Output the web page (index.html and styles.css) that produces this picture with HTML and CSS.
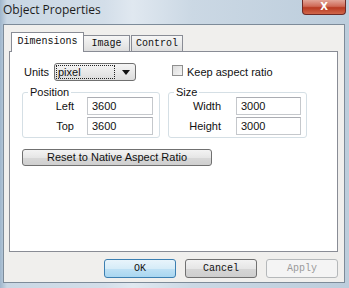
FILE: index.html
```html
<!DOCTYPE html>
<html lang="en">
  <head>
    <meta charset="UTF-8" />
    <title>Object Properties</title>
    <link rel="stylesheet" href="styles.css">
  </head>
  <body>
    <div class="window">
      <div class="titlebar">
        <div class="title">Object Properties</div>
        <div class="close">X</div>
      </div>
      <div class="client">
        <div class="tabs">
          <div class="tab active">Dimensions</div>
          <div class="tab tab-image">Image</div>
          <div class="tab tab-control">Control</div>
        </div>
        <div class="panel">
          <div class="top-grid">
            <div class="units-row">
              <span class="units-label">Units</span>
              <div class="select">
                <span class="select-value">pixel</span>
                <span class="arrow"></span>
              </div>
            </div>
            <div class="check-row">
              <span class="checkbox"></span>
              <span>Keep aspect ratio</span>
            </div>
            <fieldset class="group group-pos">
              <legend>Position</legend>
              <div class="fields">
                <label>Left</label>
                <div class="input">3600</div>
                <label>Top</label>
                <div class="input">3600</div>
              </div>
            </fieldset>
            <fieldset class="group group-size">
              <legend>Size</legend>
              <div class="fields">
                <label>Width</label>
                <div class="input">3000</div>
                <label>Height</label>
                <div class="input">3000</div>
              </div>
            </fieldset>
          </div>
          <div class="reset-btn">Reset to Native Aspect Ratio</div>
        </div>
        <div class="footer">
          <div class="btn btn-default">OK</div>
          <div class="btn">Cancel</div>
          <div class="btn btn-disabled">Apply</div>
        </div>
      </div>
    </div>
  </body>
</html>
```

FILE: styles.css
```css
html,
body {
  margin: 0;
  padding: 0;
}

body {
  font-family: "Liberation Sans", Arial, sans-serif;
  font-size: 11px;
  color: #111;
}

.window {
  width: 349px;
  height: 288px;
  display: flex;
  flex-direction: column;
  background: linear-gradient(to right, #9fb6cc 0, #c9d7e4 2%, #d3dee9 30%, #e0e8f0 38%, #cbd8e4 55%, #bccddc 100%);
}

/* Barre de titre */
.titlebar {
  height: 24px;
  display: flex;
  align-items: flex-start;
  padding-left: 3px;
}

.title {
  font-family: "Open Sans", sans-serif;
  font-size: 12px;
  line-height: 20px;
  color: #1c1c1c;
}

.close {
  margin-left: auto;
  margin-right: 3px;
  width: 44px;
  height: 15px;
  box-sizing: border-box;
  border: 1px solid #6e2a26;
  border-top: none;
  border-radius: 0 0 4px 4px;
  background: linear-gradient(to bottom, #e2a598 0, #cf6a57 45%, #b83a22 55%, #d0664a 100%);
  color: #fff;
  font-family: "DejaVu Sans", sans-serif;
  font-weight: bold;
  font-size: 10px;
  line-height: 14px;
  text-align: center;
}

/* Zone client */
.client {
  flex: 1;
  margin: 0 4px 5px 3px;
  background-color: #f0efed;
  border: 1px solid #7d8b99;
  display: flex;
  flex-direction: column;
}

.tabs {
  display: flex;
  align-items: flex-end;
  margin: 7px 0 0 7px;
  font-family: "Liberation Mono", monospace;
  font-size: 10px;
}

.tab {
  box-sizing: border-box;
  height: 16px;
  border: 1px solid #898c95;
  border-bottom: none;
  background: linear-gradient(to bottom, #f6f6f6, #dedede);
  text-align: center;
  line-height: 15px;
  margin-bottom: 0;
}

.tab.active {
  width: 73px;
  height: 20px;
  background: #fff;
  margin-bottom: -1px;
  position: relative;
  z-index: 1;
  line-height: 18px;
}

.tab-image {
  width: 46px;
  border-left: none;
}

.tab-control {
  width: 52px;
  margin-left: 1px;
}

.panel {
  box-sizing: border-box;
  height: 201px;
  margin: 0 6px 0 5px;
  padding: 11px 0 0 12px;
  background: #fff;
  border: 1px solid #898c95;
}

.top-grid {
  display: grid;
  grid-template-columns: 138px 139px;
  column-gap: 8px;
  row-gap: 5px;
}

.units-row {
  display: flex;
  align-items: center;
  height: 18px;
}

.units-label {
  width: 32px;
  padding-left: 2px;
  box-sizing: border-box;
}

.select {
  box-sizing: border-box;
  width: 82px;
  height: 18px;
  border: 1px solid #707070;
  border-radius: 3px;
  background: linear-gradient(to bottom, #f4f4f4, #dcdcdc);
  display: flex;
  align-items: center;
  padding-left: 2px;
}

.select-value {
  width: 56px;
  height: 12px;
  line-height: 12px;
  outline: 1px dotted #222;
  padding-left: 1px;
}

.arrow {
  margin-left: 8px;
  width: 0;
  height: 0;
  border-left: 4px solid transparent;
  border-right: 4px solid transparent;
  border-top: 5px solid #111;
}

.check-row {
  display: flex;
  align-items: center;
  gap: 4px;
  padding-left: 4px;
  height: 18px;
}

.checkbox {
  width: 11px;
  height: 11px;
  box-sizing: border-box;
  border: 1px solid #8f8f8f;
  background: linear-gradient(135deg, #dcdcdc, #f5f5f5);
  margin-top: -4px;
}

/* Groupes */
.group {
  margin: 0;
  min-width: 0;
  padding: 0 5px 2px 5px;
  border: 1px solid #d5dfe5;
  border-radius: 3px;
}

.group legend {
  padding: 0 2px;
  line-height: 12px;
}

.fields {
  display: grid;
  grid-template-columns: 46px 66px;
  column-gap: 13px;
  row-gap: 2px;
  align-items: center;
  margin-top: -1px;
}

.group-size .fields {
  grid-template-columns: 47px 65px;
  column-gap: 15px;
}

.fields label {
  text-align: right;
}

.input {
  box-sizing: border-box;
  height: 18px;
  border: 1px solid #c5c8cc;
  border-top-color: #abadb3;
  padding-left: 4px;
  line-height: 16px;
  background: #fff;
}

.reset-btn {
  box-sizing: border-box;
  width: 190px;
  height: 17px;
  margin-top: 11px;
  border: 1px solid #707070;
  border-radius: 3px;
  background: linear-gradient(to bottom, #f3f3f3, #e6e6e6 50%, #d8d8d8 51%, #cfcfcf);
  text-align: center;
  line-height: 15px;
}

/* Boutons du bas */
.footer {
  display: flex;
  justify-content: flex-end;
  gap: 9px;
  margin: 7px 6px 0 0;
}

.btn {
  box-sizing: border-box;
  width: 72px;
  height: 19px;
  border: 1px solid #707070;
  border-radius: 3px;
  background: linear-gradient(to bottom, #f2f2f2, #e6e6e6 50%, #d6d6d6 51%, #cecece);
  font-family: "Liberation Mono", monospace;
  font-size: 10px;
  text-align: center;
  line-height: 17px;
}

.btn-default {
  border-color: #3c7fb1;
  background: linear-gradient(to bottom, #e8f4fb, #d6ecf8 50%, #bfe1f5 51%, #a9d6f0);
}

.btn-disabled {
  border-color: #b5b8ba;
  background: #f4f4f4;
  color: #9a9a9a;
}
```
